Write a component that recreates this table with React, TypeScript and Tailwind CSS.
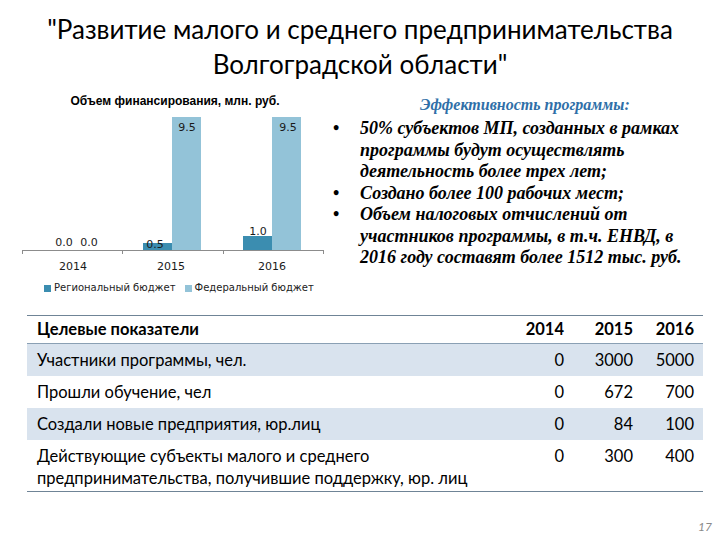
import React from 'react';

const bullets = [
  ['50% субъектов МП, созданных в рамках', 'программы будут осуществлять', 'деятельность более трех лет;'],
  ['Создано более 100 рабочих мест;'],
  ['Объем налоговых отчислений от', 'участников программы, в т.ч. ЕНВД, в', '2016 году составят более 1512 тыс. руб.'],
];

const rows = [
  { label: ['Участники программы, чел.'], v: ['0', '3000', '5000'], shaded: true },
  { label: ['Прошли обучение, чел'], v: ['0', '672', '700'], shaded: false },
  { label: ['Создали новые предприятия, юр.лиц'], v: ['0', '84', '100'], shaded: true },
  {
    label: ['Действующие субъекты малого и среднего', 'предпринимательства, получившие поддержку, юр. лиц'],
    v: ['0', '300', '400'],
    shaded: false,
  },
];

const REG = '#3b8db0';
const FED = '#93c3d8';

const Chart = () => (
  <svg width="330" height="165" viewBox="0 115 330 165" className="block" style={{ fontFamily: '"DejaVu Sans", sans-serif' }}>
    {/* bars */}
    <rect x="143" y="246" width="29" height="7" fill={REG} />
    <rect x="172" y="120" width="29" height="133" fill={FED} />
    <rect x="243" y="239" width="29" height="14" fill={REG} />
    <rect x="272" y="120" width="29" height="133" fill={FED} />
    {/* axis */}
    <line x1="22" y1="253.5" x2="323" y2="253.5" stroke="#8c8c8c" strokeWidth="1" />
    {[22, 122, 223, 323].map((x) => (
      <line key={x} x1={x + 0.5} y1="253" x2={x + 0.5} y2="257" stroke="#8c8c8c" strokeWidth="1" />
    ))}
    {/* data labels */}
    <g fontSize="11" fill="#1a1a1a" textAnchor="middle">
      <text x="64" y="249">0.0</text>
      <text x="89" y="249">0.0</text>
      <text x="155" y="251">0.5</text>
      <text x="187" y="134">9.5</text>
      <text x="258" y="238">1.0</text>
      <text x="288" y="134">9.5</text>
    </g>
    <g fontSize="11" fill="#1a1a1a" textAnchor="middle">
      <text x="73" y="273">2014</text>
      <text x="171" y="273">2015</text>
      <text x="272" y="273">2016</text>
    </g>
  </svg>
);

export default function App() {
  return (
    <div className="w-[720px] h-[540px] bg-white overflow-hidden" style={{ fontFamily: 'Lato, "Liberation Sans", sans-serif' }}>
      <h1 className="pt-[12px] text-center text-[26px] leading-[35px] font-normal text-black">
        "Развитие малого и среднего предпринимательства
        <br />
        Волгоградской области"
      </h1>

      <div className="flex h-[222px] mt-[11px]">
        <div className="w-[330px] flex flex-col">
          <div
            className="pl-[20px] text-center text-[12px] leading-[16px] font-bold text-black"
            style={{ fontFamily: '"Liberation Sans", sans-serif' }}
          >
            Объем финансирования, млн. руб.
          </div>
          <div className="mt-[3px]">
            <Chart />
          </div>
          <div
            className="flex items-center pl-[44px] text-[10px] leading-[12px] text-[#222] mt-[5px]"
            style={{ fontFamily: '"DejaVu Sans", sans-serif' }}
          >
            <span className="w-[7px] h-[7px] bg-[#3b8db0] mr-[3px]" />
            <span>Региональный бюджет</span>
            <span className="w-[7px] h-[7px] bg-[#93c3d8] ml-[9px] mr-[3px]" />
            <span>Федеральный бюджет</span>
          </div>
        </div>

        <div className="flex-1 pl-[3px]" style={{ fontFamily: '"Liberation Serif", serif' }}>
          <div className="pl-[87px] text-[16px] leading-[18px] font-bold italic text-[#2f6fa8] pt-[3px]">
            Эффективность программы:
          </div>
          <ul className="mt-[4px]">
            {bullets.map((lines, i) => (
              <li key={i} className="flex text-[18px] leading-[21.5px] font-bold italic text-black">
                <span className="w-[27px] not-italic">•</span>
                <span className="whitespace-nowrap">
                  {lines.map((l, j) => (
                    <React.Fragment key={j}>
                      {j > 0 && <br />}
                      {l}
                    </React.Fragment>
                  ))}
                </span>
              </li>
            ))}
          </ul>
        </div>
      </div>

      <div className="ml-[27px] mr-[17px] border-t border-b border-[#6f8496] text-[16.5px] text-black">
        <div className="grid grid-cols-[1fr_70px_69px_62px] h-[28px] items-center font-bold border-b border-[#8aa0b4]">
          <div className="pl-[10px]">Целевые показатели</div>
          <div className="text-right pr-[8px]">2014</div>
          <div className="text-right pr-[8px]">2015</div>
          <div className="text-right pr-[9px]">2016</div>
        </div>
        {rows.map((r, i) => (
          <div
            key={i}
            className={`grid grid-cols-[1fr_70px_69px_62px] leading-[22px] ${r.shaded ? 'bg-[#d9e3ee]' : 'bg-white'} ${r.label.length > 1 ? 'pt-[5px] pb-[2px]' : 'py-[5px]'}`}
          >
            <div className="pl-[10px]">
              {r.label.map((l, j) => (
                <div key={j}>{l}</div>
              ))}
            </div>
            <div className="text-right pr-[8px]">{r.v[0]}</div>
            <div className="text-right pr-[8px]">{r.v[1]}</div>
            <div className="text-right pr-[9px]">{r.v[2]}</div>
          </div>
        ))}
      </div>

      <div className="text-right pr-[8px] mt-[28px] text-[12px] leading-[14px] italic text-[#8a8a8a]">17</div>
    </div>
  );
}
